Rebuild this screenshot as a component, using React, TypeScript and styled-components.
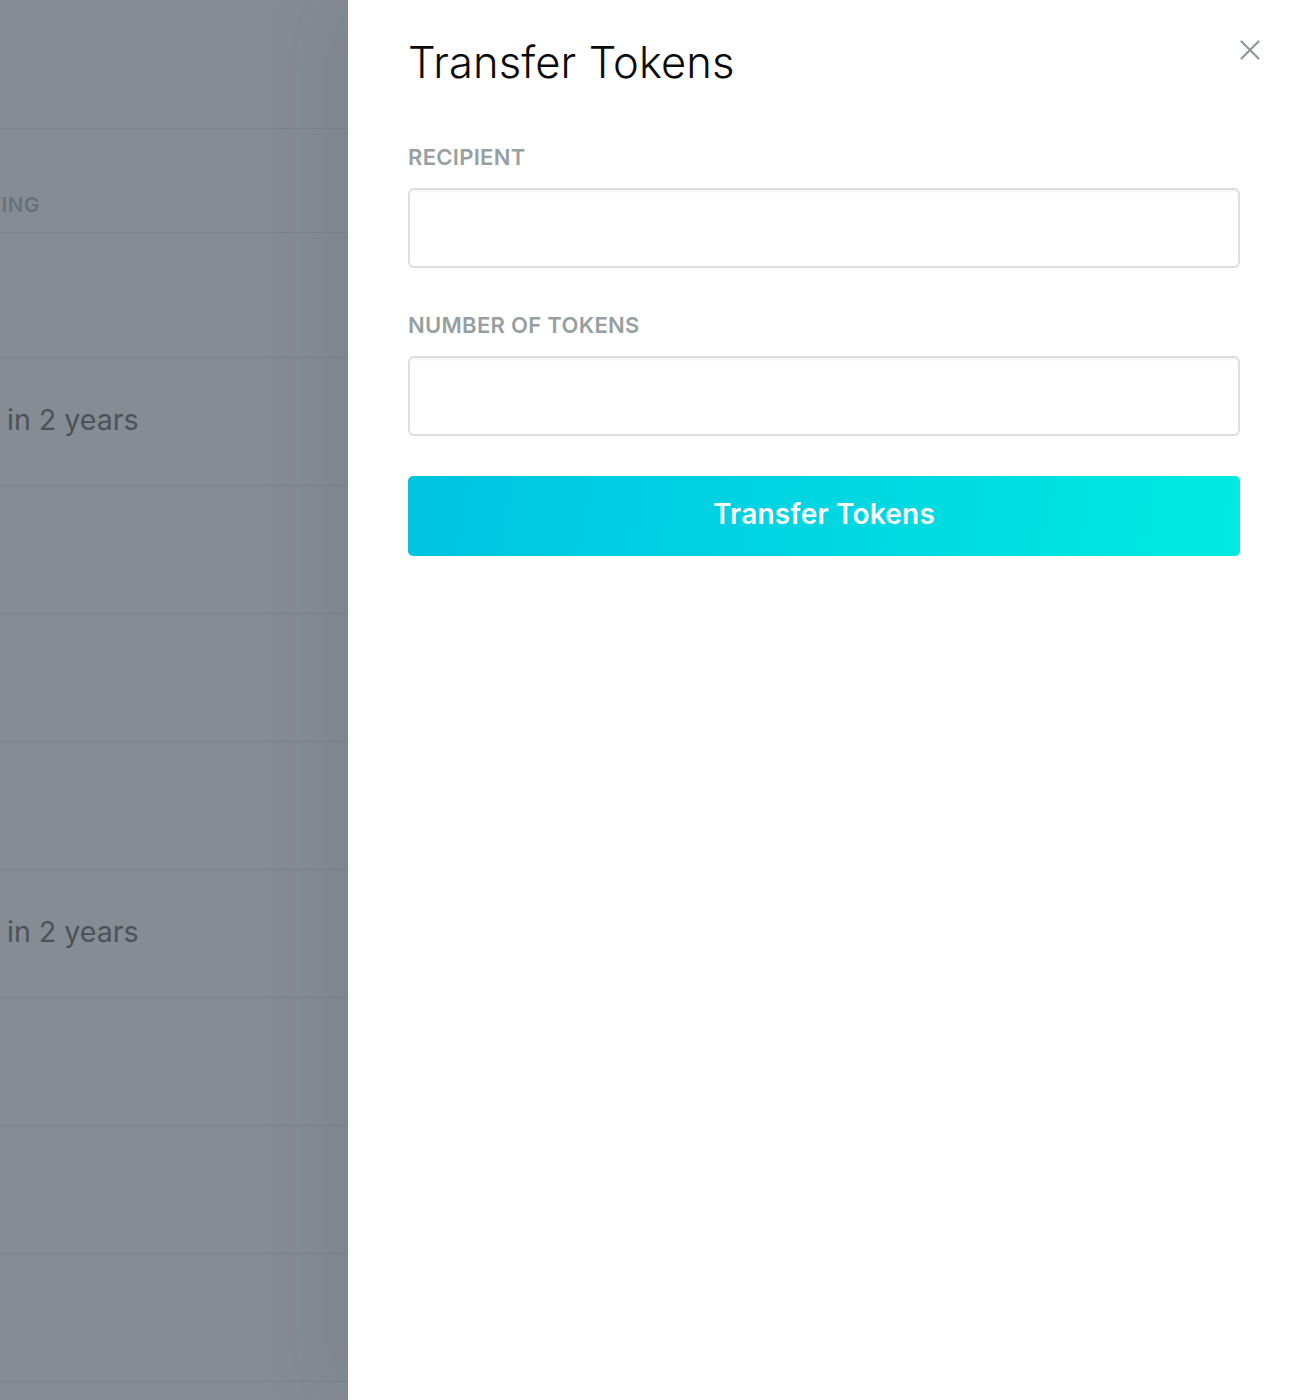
import React from "react";
import styled, { createGlobalStyle } from "styled-components";

const Global = createGlobalStyle`
  html, body { margin: 0; padding: 0; background: #858c94; }
  body { font-family: Inter, "Noto Sans", sans-serif; }
  * { box-sizing: border-box; }
`;

const Page = styled.div`
  display: flex;
  width: 1300px;
  height: 1400px;
  overflow: hidden;
`;

const Backdrop = styled.div`
  width: 348px;
  flex-shrink: 0;
  display: flex;
  flex-direction: column;
  background: #858c94;
  overflow: hidden;
`;

const Row = styled.div<{ $h: number }>`
  height: ${(p) => p.$h}px;
  flex-shrink: 0;
  border-bottom: 1px solid #7b828a;
  display: flex;
  align-items: center;
`;

const HeadCell = styled.span`
  margin-left: -55px;
  padding-top: 48px;
  font-size: 20.5px;
  font-weight: 600;
  letter-spacing: 0.6px;
  color: #6a7279;
`;

const BodyCell = styled.span`
  margin-left: 7px;
  padding-bottom: 4px;
  font-size: 28.6px;
  font-weight: 400;
  color: #4b5259;
`;

const Panel = styled.div`
  flex: 1;
  background: #ffffff;
  position: relative;
  padding: 36px 60px 0 60px;
  display: flex;
  flex-direction: column;
  box-shadow: -30px 0 60px rgba(40, 50, 60, 0.08);
`;

const Title = styled.h1`
  margin: 0;
  font-size: 43.5px;
  line-height: 53px;
  font-weight: 300;
  color: #0a0a0a;
  letter-spacing: 0.1px;
`;

const Close = styled.button`
  position: absolute;
  top: 38px;
  right: 38px;
  width: 24px;
  height: 24px;
  padding: 0;
  border: none;
  background: transparent;
  display: flex;
  align-items: center;
  justify-content: center;
  cursor: pointer;
`;

const Label = styled.label<{ $top: number }>`
  margin-top: ${(p) => p.$top}px;
  font-size: 22px;
  line-height: 26px;
  font-weight: 600;
  color: #969fa2;
  letter-spacing: 0.3px;
`;

const Input = styled.input`
  margin-top: 18px;
  width: 832px;
  height: 80px;
  border: 2px solid #dedede;
  border-radius: 6px;
  box-shadow: inset 0 2px 3px rgba(0, 0, 0, 0.04);
  font-size: 24px;
  padding: 0 20px;
  outline: none;
  font-family: inherit;
`;

const Button = styled.button`
  margin-top: 40px;
  width: 832px;
  height: 80px;
  padding: 0 0 4px 0;
  border: none;
  border-radius: 5px;
  background: linear-gradient(100deg, #00c4e2 0%, #00d2e2 40%, #00eae0 100%);
  color: #ffffff;
  font-family: inherit;
  font-size: 28px;
  font-weight: 600;
  letter-spacing: 0.2px;
  cursor: pointer;
`;

const rows = [
  { h: 129, kind: "none" },
  { h: 104, kind: "head" },
  { h: 125, kind: "none" },
  { h: 128, kind: "years" },
  { h: 128, kind: "none" },
  { h: 128, kind: "none" },
  { h: 128, kind: "none" },
  { h: 128, kind: "years" },
  { h: 128, kind: "none" },
  { h: 128, kind: "none" },
  { h: 128, kind: "none" },
  { h: 128, kind: "none" },
];

export default function App() {
  return (
    <>
      <Global />
      <Page>
        <Backdrop>
          {rows.map((r, i) => (
            <Row key={i} $h={r.h}>
              {r.kind === "head" && <HeadCell>VESTING</HeadCell>}
              {r.kind === "years" && <BodyCell>in 2 years</BodyCell>}
            </Row>
          ))}
        </Backdrop>
        <Panel>
          <Title>Transfer Tokens</Title>
          <Close aria-label="Close">
            <svg width="20" height="20" viewBox="0 0 20 20">
              <path d="M1.5 1.5 L18.5 18.5 M18.5 1.5 L1.5 18.5" stroke="#8f999d" strokeWidth="2.2" strokeLinecap="round" />
            </svg>
          </Close>
          <Label $top={55}>RECIPIENT</Label>
          <Input />
          <Label $top={44}>NUMBER OF TOKENS</Label>
          <Input />
          <Button>Transfer Tokens</Button>
        </Panel>
      </Page>
    </>
  );
}
